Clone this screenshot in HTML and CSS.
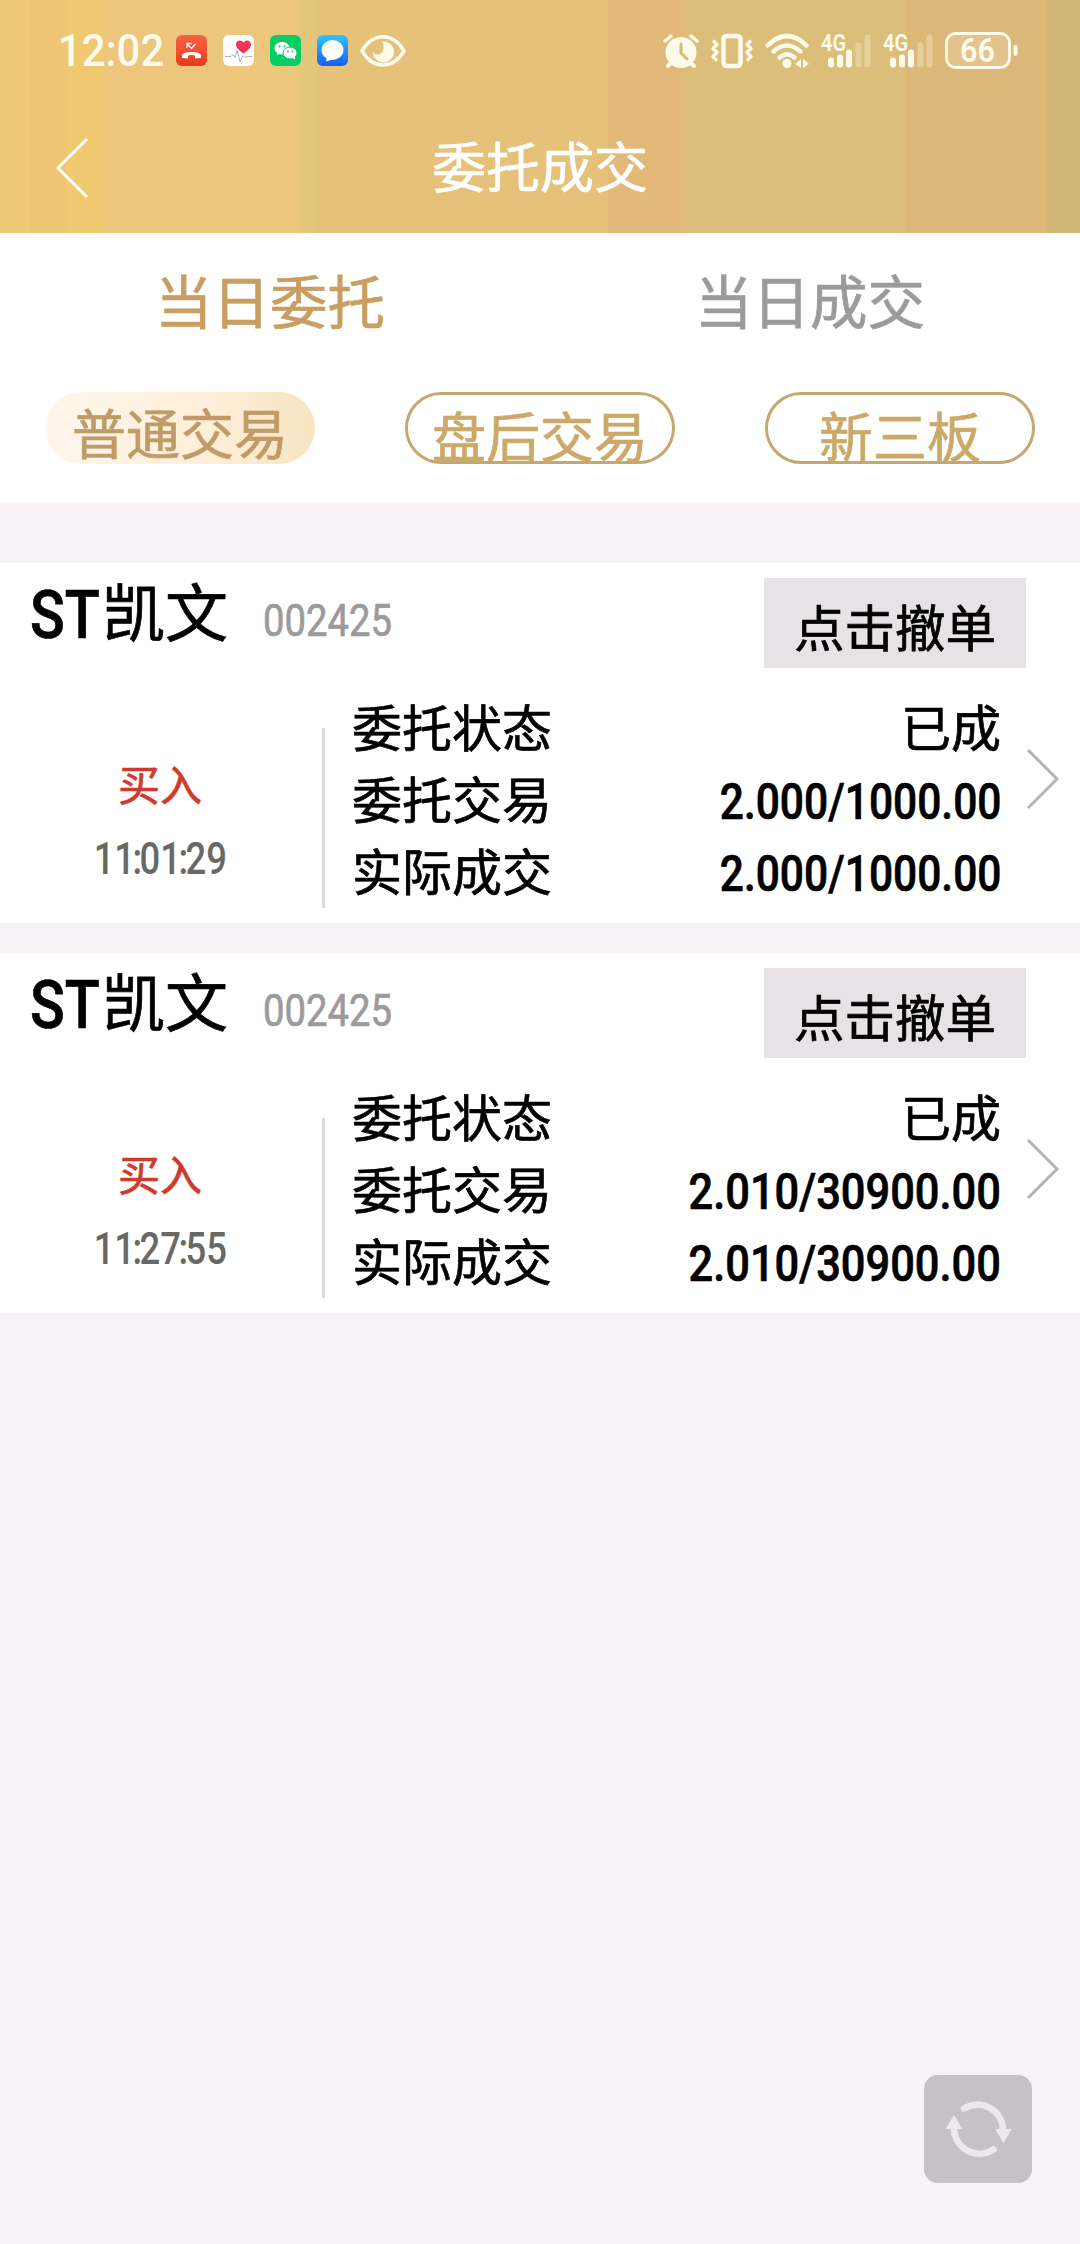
FILE: index.html
```html
<!DOCTYPE html>
<html lang="zh-CN">
<head>
<meta charset="utf-8">
<title>委托成交</title>
<link rel="stylesheet" href="styles.css">
</head>
<body>
<header class="header">
  <div class="status">
    <span class="clock"><span>12:02</span></span>
    <div class="status-apps">
      <svg width="31" height="31" viewBox="0 0 31 31"><defs><linearGradient id="gr" x2="0" y2="1"><stop stop-color="#fb6242"/><stop offset="1" stop-color="#e83a20"/></linearGradient></defs><rect width="31" height="31" rx="6" fill="url(#gr)"/><path d="M6 23v-2.500q0-3.500 9.500-3.500t9.500 3.500v2.500l-6 .5v-3q-3.500-.8-7 0v3z" fill="#fff"/><path d="M11 13V8.500h4.500M11 8.500l4.500 5 4-4.500" fill="none" stroke="#fff" stroke-width="1.300"/></svg>
      <svg width="31" height="31" viewBox="0 0 31 31"><rect width="31" height="31" rx="6" fill="#fff"/><path d="M20.500 18.500c-5-3.500-7.500-6-7.500-9.200C13 5 18.500 4 20.500 7.500 22.500 4 28 5 28 9.300c0 3.200-2.500 5.700-7.500 9.200z" fill="#ee3554"/><path d="M2 21.500h6l2-2 2 3 2-7 3 11 3-6 2 2 2-1h5" fill="none" stroke="#aaa" stroke-width=".9"/></svg>
      <svg width="31" height="31" viewBox="0 0 31 31"><rect width="31" height="31" rx="6" fill="#06ce63"/><path d="M12 7C7.800 7 4.500 9.700 4.500 13.200c0 2 1 3.600 2.800 4.800l-.8 2.300 3-1.300 2.500.4c4.200 0 7.500-2.700 7.500-6.200S16.200 7 12 7z" fill="#fff"/><ellipse cx="20" cy="18" rx="7" ry="6" fill="#fff" stroke="#06ce63"/><path d="M22 22.500l3 2v-3z" fill="#fff"/><g fill="#06ce63"><circle cx="9.500" cy="11.500" r="1"/><circle cx="14.500" cy="11.500" r="1"/><circle cx="18" cy="16.500" r=".9"/><circle cx="22.500" cy="16.500" r=".9"/></g></svg>
      <svg width="31" height="31" viewBox="0 0 31 31"><defs><linearGradient id="gb" x2="0" y2="1"><stop stop-color="#2cc6ff"/><stop offset="1" stop-color="#1a5cf2"/></linearGradient></defs><rect width="31" height="31" rx="6" fill="url(#gb)"/><ellipse cx="15.500" cy="15" rx="11" ry="10" fill="#fff"/><path d="M10 22l-1 4.500 6-2z" fill="#fff"/></svg>
    </div>
    <svg class="eye" width="46" height="32" viewBox="0 0 46 32"><path d="M2 16C13-3 33-3 44 16 33 34.500 13 34.500 2 16z" fill="none" stroke="#fffbea" stroke-width="3.500"/><path d="M22 6.500a10.500 10.500 0 1 1-9 9.500q1 3.500 4.500 3.500c6 0 7.500-7.500 4.500-13z" fill="#fffbea"/></svg>
    <div class="status-right">
      <svg width="36" height="36" viewBox="0 0 36 36"><circle cx="18" cy="19.500" r="15.500" fill="#fffbea"/><path d="M2 8l6-5M34 8l-6-5" stroke="#fffbea" stroke-width="3.500" stroke-linecap="round"/><path d="M5 33l5-5M31 33l-5-5" stroke="#fffbea" stroke-width="4" stroke-linecap="round"/><path d="M18 11V20l6 6" fill="none" stroke="#d9b975" stroke-width="3" stroke-linecap="round"/></svg>
      <svg width="42" height="36" viewBox="0 0 42 36"><rect x="12.500" y="3" width="17" height="30" rx="3" fill="none" stroke="#fffbea" stroke-width="4.500"/><path d="M2 7.500l4 4-4 4 4 4-4 4 4 4.500M40 7.500l-4 4 4 4-4 4 4 4-4 4.500" fill="none" stroke="#fffbea" stroke-width="3.300" stroke-linejoin="round"/></svg>
      <svg width="44" height="36" viewBox="0 0 44 36"><g fill="none" stroke="#fffbea" stroke-width="4.500" stroke-linecap="round"><path d="M2.500 12.500q19.500-19 39 0M8.500 18.500q13.500-12 27 0M14.500 24.500q7.500-6.500 15 0"/></g><circle cx="22" cy="30.500" r="4.500" fill="#fffbea"/><path d="M30 31l6-5v9zM38 26l6 5-6 4z" fill="#fffbea"/></svg>
      <svg width="50" height="36" viewBox="0 0 50 36"><text x="0" y="17.500" textLength="25" lengthAdjust="spacingAndGlyphs" class="net">4G</text><g stroke="#fffbea" stroke-width="6" stroke-linecap="round"><path d="M10 27.500v4M19 24.500v7M28 19.500v12"/><path d="M37.500 12.500v19M46.500 4.500v27" opacity=".3"/></g></svg>
      <svg width="50" height="36" viewBox="0 0 50 36"><text x="0" y="17.500" textLength="25" lengthAdjust="spacingAndGlyphs" class="net">4G</text><g stroke="#fffbea" stroke-width="6" stroke-linecap="round"><path d="M10 27.500v4M19 24.500v7M28 19.500v12"/><path d="M37.500 12.500v19M46.500 4.500v27" opacity=".3"/></g></svg>
      <svg width="73" height="37" viewBox="0 0 73 37"><rect x="1.500" y="1.500" width="63" height="34" rx="9" fill="#fffbea" fill-opacity=".18" stroke="#fffbea" stroke-width="2.800"/><path d="M70.500 15v7" stroke="#fffbea" stroke-width="4" stroke-linecap="round"/><text x="15" y="30" textLength="35" lengthAdjust="spacingAndGlyphs" class="battery">66</text></svg>
    </div>
  </div>
  <div class="titlebar">
    <svg class="back" width="36" height="60" viewBox="0 0 36 60"><path d="M33 1L4 30l29 29" fill="none" stroke="#fffef8" stroke-width="3"/></svg>
    <h1 class="title">委托成交</h1>
  </div>
</header>

<section class="filters">
  <nav class="tabs"><a class="tab tab-active">当日委托</a><a class="tab">当日成交</a></nav>
  <div class="pills"><a class="pill pill-active">普通交易</a><a class="pill">盘后交易</a><a class="pill">新三板</a></div>
</section>

<main class="orders">
  <article class="order">
    <div class="order-head">
      <h2 class="name"><span class="latin">ST</span>凯文</h2>
      <span class="code">002425</span>
      <button class="cancel">点击撤单</button>
    </div>
    <div class="order-body">
      <div class="side"><span class="buy">买入</span><span class="time">11<i>:</i>01<i>:</i>29</span></div>
      <dl class="details">
        <div class="row"><dt>委托状态</dt><dd>已成</dd></div>
        <div class="row"><dt>委托交易</dt><dd class="num">2.000/1000.00</dd></div>
        <div class="row"><dt>实际成交</dt><dd class="num">2.000/1000.00</dd></div>
      </dl>
      <svg class="more" width="32" height="60" viewBox="0 0 32 60"><path d="M1 1l29 29L1 59" fill="none" stroke="#b5b5b5" stroke-width="3"/></svg>
    </div>
  </article>
  <article class="order">
    <div class="order-head">
      <h2 class="name"><span class="latin">ST</span>凯文</h2>
      <span class="code">002425</span>
      <button class="cancel">点击撤单</button>
    </div>
    <div class="order-body">
      <div class="side"><span class="buy">买入</span><span class="time">11<i>:</i>27<i>:</i>55</span></div>
      <dl class="details">
        <div class="row"><dt>委托状态</dt><dd>已成</dd></div>
        <div class="row"><dt>委托交易</dt><dd class="num num-long">2.010/30900.00</dd></div>
        <div class="row"><dt>实际成交</dt><dd class="num num-long">2.010/30900.00</dd></div>
      </dl>
      <svg class="more" width="32" height="60" viewBox="0 0 32 60"><path d="M1 1l29 29L1 59" fill="none" stroke="#b5b5b5" stroke-width="3"/></svg>
    </div>
  </article>
</main>

<a class="refresh">
  <svg width="108" height="108" viewBox="0 0 108 108"><g fill="none" stroke="#ece9ed" stroke-width="6.500" stroke-linecap="round"><path d="M40 33.500A25.500 25.500 0 0 1 79 56"/><path d="M69.500 74.500A25.500 25.500 0 0 1 30 52"/></g><path d="M71 54h17l-8.500 14zM21.500 54h17L30 40z" fill="#ece9ed"/></svg>
</a>
</body>
</html>
```
FILE: styles.css
```css
* { box-sizing: border-box; }
body {
  margin: 0;
  width: 1080px;
  min-height: 2244px;
  background: #f6f2f6;
  font-family: "Noto Sans CJK SC", Roboto, sans-serif;
  color: #000;
  -webkit-text-stroke: .7px currentColor;
}
svg { display: block; flex: none; overflow: visible; }
svg text { -webkit-text-stroke: 0; }
h1, h2, dl, dd { margin: 0; font-weight: 400; }

.header {
  height: 233px;
  background: linear-gradient(90deg,
    #eeca78 0 30px, #eec574 30px 66px, #eec970 66px 104px,
    #ebc67c 104px 300px, #e4c67a 300px 318px, #e5c17a 318px 608px,
    #e3b979 608px 685px, #dbbe7a 685px 905px,
    #dcb978 905px 1047px, #d2b878 1047px);
}
.status {
  display: flex;
  align-items: center;
  height: 101px;
  padding: 0 62px 0 58px;
}
.clock {
  width: 118px;
  font: 500 45px/50px Roboto, sans-serif;
  color: #fffbea;
  -webkit-text-stroke: 0;
}
.clock span {
  display: inline-block;
  transform: scaleX(.93);
  transform-origin: left;
}
.status-apps { display: flex; gap: 16px; }
.eye { margin-left: 12px; }
.status-right {
  display: flex;
  align-items: center;
  gap: 12px;
  margin-left: auto;
}
.net { font: 600 23px Roboto, sans-serif; fill: #fffbea; }
.battery { font: 600 33px Roboto, sans-serif; fill: #fffbea; }

.titlebar {
  display: grid;
  grid-template-columns: 140px 1fr 140px;
  align-items: center;
  height: 132px;
}
.back { margin: 2px 0 0 54px; }
.title {
  font-size: 54px;
  line-height: 72px;
  text-align: center;
  color: #fff;
  margin-bottom: 4px;
}

.filters { height: 270px; background: #fff; }
.tabs { display: grid; grid-template-columns: 1fr 1fr; height: 159px; }
.tab {
  font-size: 57.500px;
  line-height: 132px;
  text-align: center;
  color: #9c9a9d;
}
.tab-active { color: #c99e60; }
.pills { display: flex; gap: 90px; padding: 0 45px; }
.pill {
  width: 270px;
  height: 72px;
  overflow: hidden;
  border: 3px solid #c5a870;
  border-radius: 36px;
  font-size: 54px;
  line-height: 79px;
  text-align: center;
  color: #cca968;
}
.pill-active {
  overflow: visible;
  border: 0;
  background: linear-gradient(90deg, #fff6ec, #ffeed9 60%, #f5e5c0);
  color: #bf9b68;
}

.orders { display: grid; gap: 30px; padding-top: 60px; }
.order { height: 360px; background: #fff; }
.order-head {
  display: flex;
  align-items: flex-start;
  height: 129px;
  padding: 15px 54px 0 30px;
}
.name {
  width: 233px;
  font-size: 63px;
  line-height: 61px;
  white-space: nowrap;
}
.latin {
  display: inline-block;
  width: 72px;
  font-family: Roboto, sans-serif;
  font-weight: 500;
  font-size: 66px;
  transform: translateY(2px) scaleX(.87);
  transform-origin: left;
}
.code {
  font: 400 45px/50px Roboto, sans-serif;
  color: #9c9a9d;
  padding-top: 18px;
  transform: scaleX(.85);
  transform-origin: left;
}
.cancel {
  width: 262px;
  height: 90px;
  margin-left: auto;
  padding: 3px 0 0;
  border: 0;
  background: #e6e2e6;
  font: 400 50.500px/86px "Noto Sans CJK SC", sans-serif;
  color: #000;
}
.order-body { display: flex; align-items: flex-start; }
.side {
  width: 325px;
  height: 180px;
  margin-top: 36px;
  padding-top: 19px;
  padding-right: 2px;
  display: flex;
  flex-direction: column;
  align-items: center;
  border-right: 3px solid #dddadd;
}
.buy { font-size: 42px; line-height: 72px; color: #d03a2c; }
.time {
  font: 500 45px/72px Roboto, sans-serif;
  padding-top: 4px;
  color: #686866;
  -webkit-text-stroke: 0;
  transform: scaleX(.81);
}
.time i { font-style: normal; margin: 0 -.07em; }
.details { width: 676px; margin-top: -3px; padding-left: 27px; }
.row {
  display: flex;
  justify-content: space-between;
  font-size: 50px;
  line-height: 72px;
}
.num {
  font-family: Roboto, sans-serif;
  font-weight: 500;
  padding-top: 5px;
  margin-bottom: -5px;
  transform: scaleX(.85);
  transform-origin: right;
}
.num-long { transform: scaleX(.868); }
.more { margin: 57px 0 0 26px; }

.refresh {
  position: fixed;
  left: 924px;
  top: 2075px;
  width: 108px;
  height: 108px;
  border-radius: 14px;
  background: #c4c2c5;
}
```
